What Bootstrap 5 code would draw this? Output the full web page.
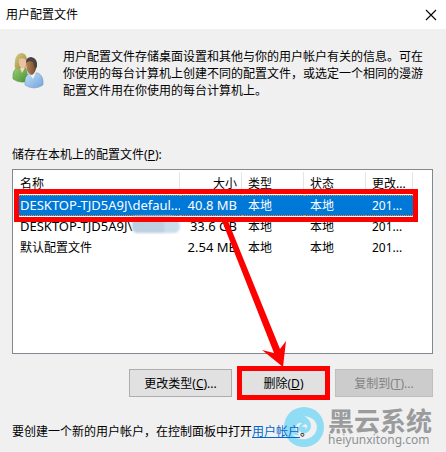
<!DOCTYPE html>
<html lang="zh-CN">
<head>
<meta charset="utf-8">
<meta name="viewport" content="width=device-width, initial-scale=1">
<title>用户配置文件</title>
<link href="https://cdn.jsdelivr.net/npm/bootstrap@5.3.0/dist/css/bootstrap.min.css" rel="stylesheet">
<style>
body{background:#f0f0f0;color:#000;font-family:"Noto Sans","Noto Sans CJK SC",sans-serif;font-size:12px;line-height:17px}
.title-bar{height:29px;padding:0 9px 0 6px}
.close-btn{width:12px;height:12px;line-height:0}
.intro{padding:19px 20px 0 12px;gap:19px}
.intro-icon{width:32px;height:40px;margin-top:4px}
.list-label{margin:47px 12px 6px}
.profile-box{margin:0 13px 0 12px;height:185px;border:1px solid #828790}
.profile-table{width:394px;table-layout:fixed;border-collapse:separate;border-spacing:0;margin-left:6px}
.profile-table th,.profile-table td{padding:0 5px 0 6px;height:21px;font-weight:400;white-space:nowrap;overflow:hidden}
.profile-table th{height:25px;padding-top:2px;position:relative}
.profile-table th::after{content:"";position:absolute;right:0;top:2px;bottom:0;border-right:1px solid #e5e5e5}
.profile-table th:first-child,.profile-table td:first-child{padding:0 0 0 1px}
.profile-table th:first-child{padding-top:2px}
.profile-table td:last-child,.profile-table th:last-child{padding-right:0}
.latin{font-size:13px}
.picked{position:relative}
.picked td{background:#0078d7;color:#fff;border-top:1px dotted #e8902c;border-bottom:1px dotted #e8902c}
.picked::after{content:"";position:absolute;z-index:2;inset:-6px -5px;border:5px solid #f00;pointer-events:none}
.smudge{position:absolute;left:113px;top:0;width:48px;height:17px;border-radius:7px 20px 12px 10px;background:linear-gradient(90deg,#bdd0e1 66%,#c9dcea 68%);filter:blur(1px)}
.actions{padding:12px 13px 0;gap:5px}
.dlg-btn{height:34px;padding:0;border-radius:0;background:#e1e1e1;color:#000;font-size:12px;line-height:17px}
.plain-btn{height:28px;border:1px solid #adadad}
.wide{width:103px}
.mid{width:93px;border:5px solid #f00}
.far{width:98px}
.dlg-btn:disabled{background:#ccc;border-color:#bfbfbf;color:#838383;opacity:1}
.foot{padding:10px 12px 0;height:52px}
.foot-text{z-index:1}
.foot a{color:#0066cc}
.arrow{position:absolute;left:216px;top:216px;z-index:3;pointer-events:none}
.brand{position:absolute;right:14px;top:6px;gap:4px}
.brand-name{font:700 26px/26px "Noto Sans CJK SC",sans-serif;color:#999b9d}
.brand-url{font:12px/14px "Noto Sans",sans-serif;color:#8e9093}
</style>
<script src="https://cdn.jsdelivr.net/npm/bootstrap@5.3.0/dist/js/bootstrap.bundle.min.js"></script>
</head>
<body>
<main class="position-relative">
  <header class="title-bar bg-white d-flex align-items-center justify-content-between">
    <span>用户配置文件</span>
    <button type="button" class="close-btn border-0 bg-transparent p-0" aria-label="关闭">
      <svg width="12" height="12" viewBox="0 0 12 12"><path d="M1 1L11 11M11 1L1 11" stroke="#000" stroke-width="1.1"/></svg>
    </button>
  </header>
  <section class="intro d-flex">
    <svg class="intro-icon flex-shrink-0" viewBox="0 0 32 40" aria-hidden="true">
      <defs>
        <linearGradient id="green" x2="1" y2="1"><stop stop-color="#a5cf78"/><stop offset="1" stop-color="#3f8f2c"/></linearGradient>
        <linearGradient id="blue" x2="1" y2="1"><stop stop-color="#c5e0f7"/><stop offset="1" stop-color="#6fa3dc"/></linearGradient>
        <linearGradient id="blond" x2="1" y2="1"><stop stop-color="#d8cf86"/><stop offset="1" stop-color="#948233"/></linearGradient>
        <linearGradient id="skin" x2="1"><stop stop-color="#b88459"/><stop offset="1" stop-color="#75472c"/></linearGradient>
      </defs>
      <path d="M1 27Q0 18 6 15L14 16L17 29Q8 32 1 27Z" fill="url(#green)" stroke="#548b3c" stroke-width=".5"/>
      <path d="M4 17Q2 16 3 9Q4 1 10 1Q16 2 15 12L12 17Z" fill="url(#blond)"/>
      <path d="M7 7Q12 5 14 8Q15 14 11 17Q6 15 7 7Z" fill="#eac2a0"/>
      <path d="M8 16L10 21L13 16Z" fill="#f1dbc5"/>
      <path d="M13 33Q12 24 18 21L26 21Q32 24 31 33Q22 39 13 33Z" fill="url(#blue)" stroke="#6892be" stroke-width=".5"/>
      <path d="M17 21L21 27L24 20Z" fill="#edf6fd"/>
      <path d="M14 10Q15 5 20 6Q26 8 24 17Q22 23 19 23Q14 21 14 10Z" fill="url(#skin)"/>
      <path d="M14 11Q14 5 19 5Q26 6 25 15L23 17L21 10Q17 8 14 11Z" fill="#49443f"/>
    </svg>
    <p class="m-0">用户配置文件存储桌面设置和其他与你的用户帐户有关的信息。可在你使用的每台计算机上创建不同的配置文件，或选定一个相同的漫游配置文件用在你使用的每台计算机上。</p>
  </section>
  <div class="list-label" id="profiles">储存在本机上的配置文件(<u>P</u>):</div>
  <section class="profile-box bg-white">
    <table class="profile-table" aria-labelledby="profiles">
      <colgroup><col style="width:161px"><col style="width:62px"><col style="width:62px"><col style="width:62px"><col style="width:47px"></colgroup>
      <thead><tr><th>名称</th><th class="text-end">大小</th><th>类型</th><th>状态</th><th>更改...</th></tr></thead>
      <tbody>
        <tr class="picked"><td class="latin">DESKTOP-TJD5A9J\defaul...</td><td class="latin text-end">40.8 MB</td><td>本地</td><td>本地</td><td>201...</td></tr>
        <tr class="position-relative"><td class="latin">DESKTOP-TJD5A9J\<span class="smudge"></span></td><td class="latin text-end">33.6 GB</td><td>本地</td><td>本地</td><td>201...</td></tr>
        <tr><td>默认配置文件</td><td class="latin text-end">2.54 MB</td><td>本地</td><td>本地</td><td>201...</td></tr>
      </tbody>
    </table>
  </section>
  <div class="actions d-flex justify-content-end align-items-center">
    <button type="button" class="dlg-btn plain-btn wide">更改类型(<u>C</u>)...</button>
    <button type="button" class="dlg-btn mid">删除(<u>D</u>)</button>
    <button type="button" class="dlg-btn plain-btn far" disabled>复制到(<u>T</u>)...</button>
  </div>
  <footer class="foot position-relative d-flex align-items-center">
    <span class="foot-text">要创建一个新的用户帐户，在控制面板中打开<a href="#">用户帐户</a>。</span>
    <div class="brand d-flex align-items-center">
      <svg width="40" height="42" viewBox="0 0 40 42" aria-hidden="true">
        <circle cx="20" cy="21" r="20" fill="#8fdcf5"/>
        <path d="M7 26Q10 30 15 29Q10 25 12 20Q14 16 18 17Q14 20 15 24Q17 28 22 27Q27 25 27 19Q26 13 20 10Q31 11 33 20Q33 30 23 33Q12 35 7 26Z" fill="#f0f0f0"/>
        <path d="M18 21Q20 17 23 19Q24 22 21 23Q23 20 18 21Z" fill="#f0f0f0"/>
      </svg>
      <div><div class="brand-name">黑云系统</div><div class="brand-url">heiyunxitong.com</div></div>
    </div>
  </footer>
  <svg class="arrow" width="74" height="152" viewBox="0 0 74 152" aria-hidden="true"><path d="M6 5L12 5L64 133L70 125L67 151L46 134L58 137Z" fill="#f00"/></svg>
</main>
</body>
</html>
